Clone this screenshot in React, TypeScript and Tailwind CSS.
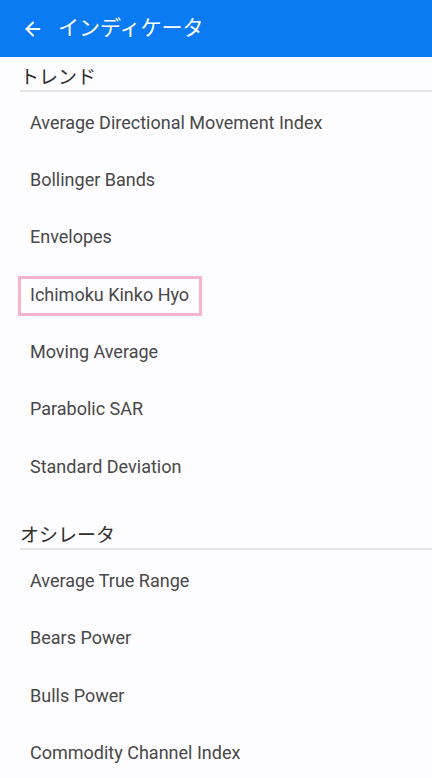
import { ArrowLeft } from "lucide-react";

const trend = [
  "Average Directional Movement Index",
  "Bollinger Bands",
  "Envelopes",
  "Ichimoku Kinko Hyo",
  "Moving Average",
  "Parabolic SAR",
  "Standard Deviation",
];

const oscillator = [
  "Average True Range",
  "Bears Power",
  "Bulls Power",
  "Commodity Channel Index",
];

function Item({ name, marked }: { name: string; marked?: boolean }) {
  return (
    <div className="h-[57.33px] flex pl-[30px] pt-[3px]">
      <span className="relative flex items-center text-[18px] text-[#484848]">
        {name}
        {marked && (
          <span className="absolute left-[-12px] right-[-13px] top-[9px] bottom-[5px] border-[3px] border-[#f5b3cc]" />
        )}
      </span>
    </div>
  );
}

function Section({ title, items, first }: { title: string; items: string[]; first?: boolean }) {
  return (
    <div>
      <div
        className={`ml-[20px] border-b-2 border-[#e4e2e8] flex items-end pb-[3px] ${
          first ? "h-[35px]" : "h-[57px]"
        }`}
      >
        <span className="text-[19px] text-[#2e2e2e] leading-none">{title}</span>
      </div>
      {items.map((n) => (
        <Item key={n} name={n} marked={n === "Ichimoku Kinko Hyo"} />
      ))}
    </div>
  );
}

export default function App() {
  return (
    <div
      className="w-[432px] h-[778px] overflow-hidden bg-[#fdfcfe]"
      style={{ fontFamily: 'Roboto, "Noto Sans CJK JP", sans-serif' }}
    >
      <div className="h-[57px] bg-[#0b7bf4] flex items-center">
        <ArrowLeft className="ml-[22px] text-white" size={22} strokeWidth={2.2} />
        <span className="ml-[14px] text-white text-[21px]">インディケータ</span>
      </div>
      <Section title="トレンド" items={trend} first />
      <Section title="オシレータ" items={oscillator} />
    </div>
  );
}
